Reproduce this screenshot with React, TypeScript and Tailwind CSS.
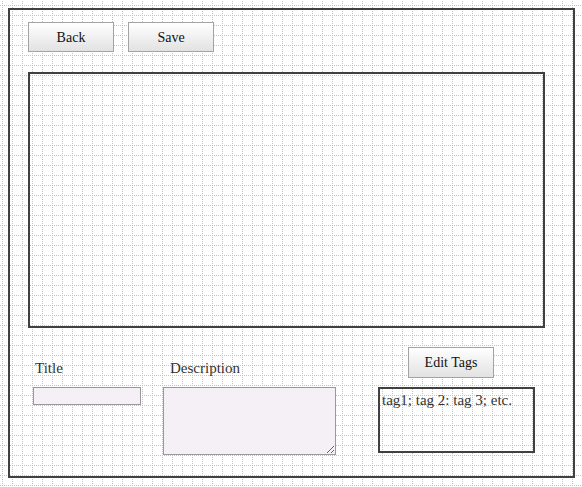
import React from 'react';

// dotted 10px grid drawn behind the whole mockup
function GridBackdrop() {
  return (
    <svg className="absolute inset-0 h-full w-full" aria-hidden="true">
      <defs>
        <pattern id="dots" x="2" y="5" width="10" height="10" patternUnits="userSpaceOnUse">
          <line x1="0.5" y1="0" x2="0.5" y2="10" stroke="#c2c2c2" strokeWidth="1" strokeDasharray="1 1" />
          <line x1="0" y1="0.5" x2="10" y2="0.5" stroke="#c2c2c2" strokeWidth="1" strokeDasharray="1 1" />
        </pattern>
      </defs>
      <rect width="100%" height="100%" fill="url(#dots)" />
    </svg>
  );
}

function MockButton({ label, className = '' }: { label: string; className?: string }) {
  return (
    <button
      className={`w-[86px] border border-[#a3a3a3] bg-gradient-to-b from-white to-[#e2e2e2] text-[14px] text-[#111] ${className}`}
    >
      {label}
    </button>
  );
}

export default function App() {
  return (
    <div className="relative h-[487px] w-[582px] overflow-hidden bg-white font-['Liberation_Serif','DejaVu_Serif',serif]">
      <GridBackdrop />
      <div className="relative p-[8px]">
        <div className="h-[470px] w-[567px] border-2 border-[#404040] pl-[18px] pt-[12px]">
          {/* top buttons */}
          <div className="flex gap-[14px]">
            <MockButton label="Back" className="h-[30px]" />
            <MockButton label="Save" className="h-[30px]" />
          </div>

          {/* main canvas */}
          <div className="mt-[20px] h-[256px] w-[517px] border-2 border-[#404040]" />

          {/* bottom fields */}
          <div className="mt-[19px] flex items-start">
            <div className="ml-[5px] flex flex-col pt-[11px]">
              <span className="h-[20px] pl-[2px] text-[15px] leading-[20px] text-[#333]">Title</span>
              <input className="mt-[9px] h-[18px] w-[108px] border border-[#999] bg-[#f4f0f5] outline-none" />
            </div>
            <div className="ml-[22px] flex flex-col pt-[11px]">
              <span className="h-[20px] pl-[7px] text-[15px] leading-[20px] text-[#333]">Description</span>
              <textarea className="mt-[9px] h-[68px] w-[173px] border border-[#999] bg-[#f4f0f5] outline-none" />
            </div>
            <div className="ml-[42px] flex flex-col">
              <MockButton label="Edit Tags" className="ml-[30px] h-[31px]" />
              <div className="mt-[9px] h-[66px] w-[157px] border-2 border-[#404040] px-[2px] pt-[2px] text-[15px] leading-[18px] text-[#333]">
                tag1; tag 2: tag 3; etc.
              </div>
            </div>
          </div>
        </div>
      </div>
    </div>
  );
}
